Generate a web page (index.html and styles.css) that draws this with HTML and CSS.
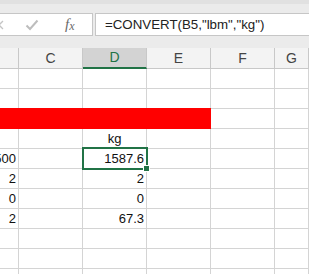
FILE: index.html
```html
<!DOCTYPE html>
<html lang="en">
<head>
    <meta charset="UTF-8">
    <title>Sheet</title>
    <link rel="stylesheet" href="styles.css">
</head>
<body>
    <div class="topbar">
        <div class="fbar">
            <div class="tools">
                <svg class="ico-x" width="10" height="10" viewBox="0 0 10 10">
                    <path d="M1 1 L9 9 M9 1 L1 9" stroke="#c4c4c4" stroke-width="1.3" fill="none"/>
                </svg>
                <svg class="ico-check" width="14" height="12" viewBox="0 0 14 12">
                    <path d="M1.5 6.5 L5 10 L12.5 1.5" stroke="#bdbdbd" stroke-width="2" fill="none"/>
                </svg>
                <span class="fx">f<span class="fx-x">x</span></span>
            </div>
            <div class="formula">=CONVERT(B5,"lbm","kg")</div>
        </div>
    </div>

    <div class="sheet">
        <!-- column headers -->
        <div class="hd"></div>
        <div class="hd">C</div>
        <div class="hd hd-sel">D</div>
        <div class="hd">E</div>
        <div class="hd">F</div>
        <div class="hd">G</div>

        <div class="c"></div><div class="c"></div><div class="c"></div><div class="c"></div><div class="c"></div><div class="c"></div>
        <div class="c"></div><div class="c"></div><div class="c"></div><div class="c"></div><div class="c"></div><div class="c"></div>

        <div class="c red"></div><div class="c red"></div><div class="c red"></div><div class="c red"></div><div class="c"></div><div class="c"></div>

        <div class="c"></div><div class="c"></div><div class="c mid">kg</div><div class="c"></div><div class="c"></div><div class="c"></div>

        <div class="c num clip">3500</div><div class="c"></div>
        <div class="c num sel">1587.6<span class="sel-box"><span class="handle"></span></span></div>
        <div class="c"></div><div class="c"></div><div class="c"></div>

        <div class="c num">2</div><div class="c"></div><div class="c num">2</div><div class="c"></div><div class="c"></div><div class="c"></div>
        <div class="c num">0</div><div class="c"></div><div class="c num">0</div><div class="c"></div><div class="c"></div><div class="c"></div>
        <div class="c num">2</div><div class="c"></div><div class="c num">67.3</div><div class="c"></div><div class="c"></div><div class="c"></div>

        <div class="c"></div><div class="c"></div><div class="c"></div><div class="c"></div><div class="c"></div><div class="c"></div>
        <div class="c"></div><div class="c"></div><div class="c"></div><div class="c"></div><div class="c"></div><div class="c"></div>
        <div class="c"></div><div class="c"></div><div class="c"></div><div class="c"></div><div class="c"></div><div class="c"></div>
    </div>
</body>
</html>
```

FILE: styles.css
```css
body {
    margin: 0;
    width: 309px;
    height: 274px;
    overflow: hidden;
    background: #fff;
    font-family: "Liberation Sans", Arial, sans-serif;
}
.topbar {
    height: 48px;
    box-sizing: border-box;
    background: #ebebeb;
    border-top: 4px solid #e1e1e1;
    padding-top: 9px;
}
.fbar {
    display: flex;
    gap: 2px;
    height: 23px;
}
.tools {
    width: 93px;
    box-sizing: border-box;
    background: #fff;
    border: 1px solid #c6c6c6;
    border-left: none;
    display: flex;
    align-items: center;
}
.ico-x {
    margin-left: -6px;
}
.ico-check {
    margin-left: 21px;
}
.fx {
    margin-left: 26px;
    font-family: "Liberation Serif", serif;
    font-style: italic;
    font-size: 15px;
    color: #6a6a6a;
}
.fx-x {
    font-size: 12px;
    vertical-align: -1px;
}
.formula {
    flex: 1;
    box-sizing: border-box;
    background: #fff;
    border: 1px solid #c6c6c6;
    border-right: none;
    padding-left: 9px;
    font-size: 13.3px;
    line-height: 21px;
    color: #222;
    white-space: nowrap;
}
.sheet {
    display: grid;
    grid-template-columns: 19px 64px 64px 64px 64px 1fr;
    grid-template-rows: 21px;
    grid-auto-rows: 20px;
}
.hd {
    box-sizing: border-box;
    background: #f3f3f3;
    border-right: 1px solid #c8c8c8;
    border-bottom: 1px solid #c8c8c8;
    text-align: center;
    font-size: 14px;
    line-height: 20px;
    color: #444;
}
.hd-sel {
    background: #d3d3d3;
    color: #217346;
    border-bottom: 2px solid #217346;
    line-height: 19px;
}
.c {
    box-sizing: border-box;
    border-right: 1px solid #d4d4d4;
    border-bottom: 1px solid #d4d4d4;
    font-size: 13px;
    line-height: 19px;
    padding: 0 2px;
    color: #111;
    white-space: nowrap;
}
.num {
    display: flex;
    justify-content: flex-end;
}
.clip {
    overflow: hidden;
}
.mid {
    text-align: center;
}
.red {
    background: #ff0000;
    border-color: #ff0000;
    box-shadow: 0 -1px 0 #ff0000;
}
.sel {
    position: relative;
}
.sel-box {
    position: absolute;
    left: -1px;
    top: -2px;
    right: -2px;
    bottom: -2px;
    border: 2px solid #217346;
}
.handle {
    position: absolute;
    right: -4px;
    bottom: -4px;
    width: 5px;
    height: 5px;
    background: #217346;
    border: 1px solid #fff;
}
```
